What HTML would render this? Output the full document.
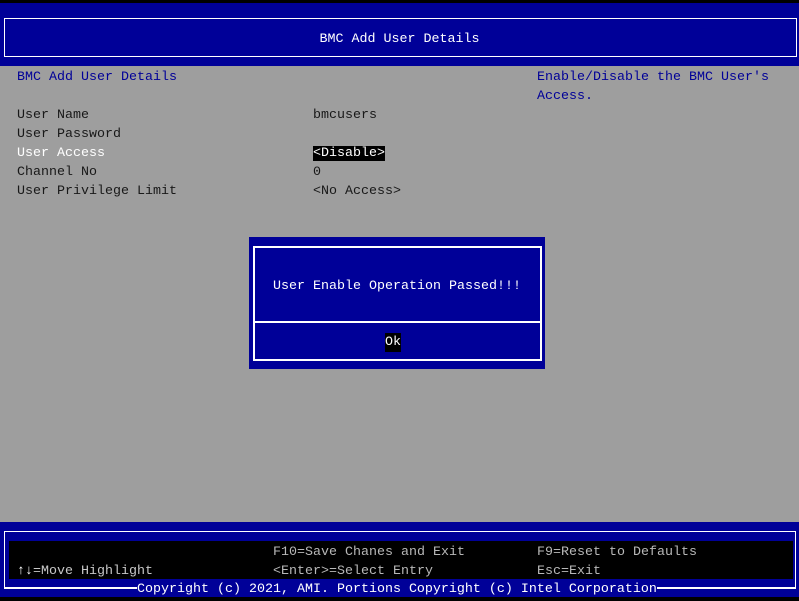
<!DOCTYPE html>
<html><head><style>
*{margin:0;padding:0;box-sizing:border-box}
body{width:799px;height:601px;background:#000;position:relative;overflow:hidden;font-family:"Liberation Mono",monospace;font-size:13.33px;line-height:19px}
.a{position:absolute;white-space:pre}
.bl{background:#000098}
</style></head><body>
<div class="a bl" style="left:0;top:3px;width:799px;height:63px"></div>
<div class="a" style="left:4px;top:18px;width:793px;height:39px;border:1px solid #fff"></div>
<div class="a" style="left:0;top:30px;width:799px;text-align:center;color:#fff">BMC Add User Details</div>
<div class="a" style="left:0;top:66px;width:799px;height:456px;background:#9e9e9e"></div>
<div class="a" style="left:17px;top:68px;color:#000098">BMC Add User Details</div>
<div class="a" style="left:537px;top:68px;color:#000098">Enable/Disable the BMC User's
Access.</div>
<div class="a" style="left:17px;top:106px;color:#181818">User Name
User Password
<span style="color:#fff">User Access</span>
Channel No
User Privilege Limit</div>
<div class="a" style="left:313px;top:106px;color:#181818">bmcusers

<span style="background:#000;color:#fff">&lt;Disable&gt;</span>
0
&lt;No Access&gt;</div>
<div class="a bl" style="left:249px;top:237px;width:296px;height:132px"></div>
<div class="a" style="left:253px;top:246px;width:289px;height:115px;border:2px solid #fff"></div>
<div class="a" style="left:253px;top:321px;width:289px;height:2px;background:#fff"></div>
<div class="a" style="left:249px;top:277px;width:296px;text-align:center;color:#fff">User Enable Operation Passed!!!</div>
<div class="a" style="left:385px;top:333px;color:#fff;background:#000">Ok</div>
<div class="a bl" style="left:0;top:522px;width:799px;height:75px"></div>
<div class="a" style="left:4px;top:531px;width:792px;height:58px;border:1px solid #fff;border-bottom:2px solid #fff"></div>
<div class="a" style="left:9px;top:541px;width:784px;height:38px;background:#000"></div>
<div class="a" style="left:17px;top:562px;color:#c8c8c8"><span style="color:#fff">↑↓</span>=Move Highlight</div>
<div class="a" style="left:273px;top:543px;color:#b8b8b8">F10=Save Chanes and Exit
&lt;Enter&gt;=Select Entry</div>
<div class="a" style="left:537px;top:543px;color:#b8b8b8">F9=Reset to Defaults
Esc=Exit</div>
<div class="a bl" style="left:137px;top:580px;color:#fff;height:17px;line-height:19px">Copyright (c) 2021, AMI. Portions Copyright (c) Intel Corporation</div>
</body></html>
